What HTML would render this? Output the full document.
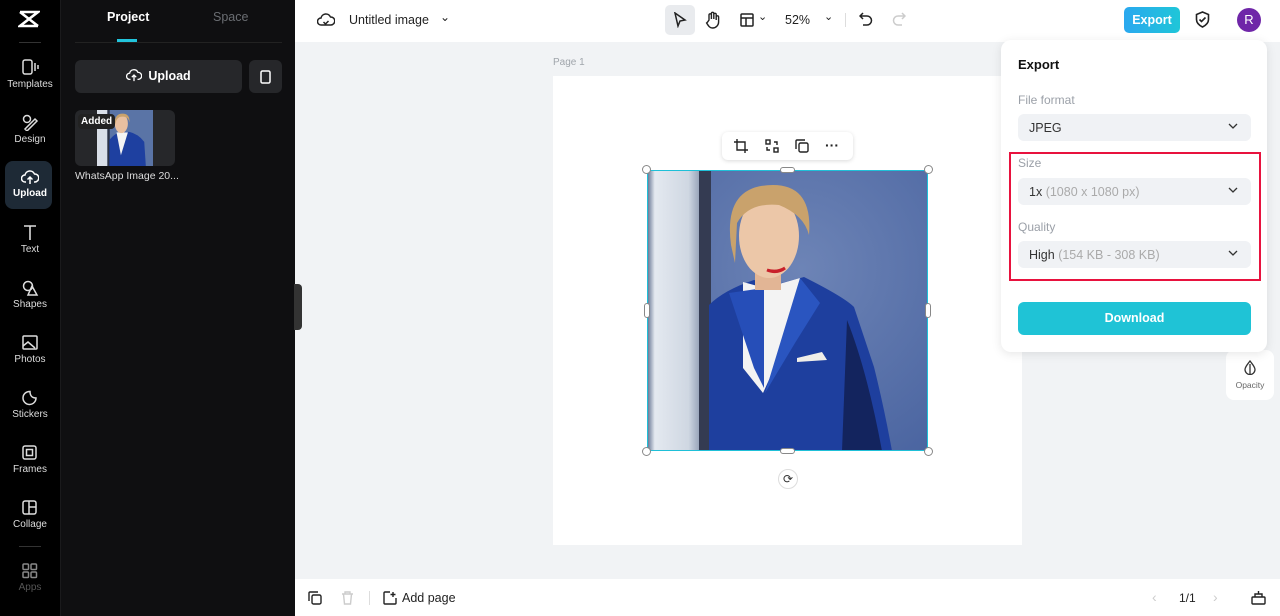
<!DOCTYPE html><html><head><style>
*{box-sizing:border-box;margin:0;padding:0}
body{width:1280px;height:616px;overflow:hidden;font-family:"Liberation Sans",sans-serif;position:relative;background:#f1f3f5}
.abs{position:absolute}
.rail{left:0;top:0;width:60px;height:616px;background:#000}
.ri{position:absolute;left:0;width:60px;text-align:center;color:#ddd;font-size:10px}
.ri svg{display:block;margin:0 auto 3px}
.panel{left:60px;top:0;width:235px;height:616px;background:#0f0f11;border-left:1px solid #1a1a1c}
.top{left:295px;top:0;width:985px;height:42px;background:#fff}
.bot{left:295px;top:579px;width:985px;height:37px;background:#fff}
.lbl{font-size:12px;color:#9ba0a8}
.dd{position:absolute;left:17px;width:233px;height:27px;background:#f0f2f5;border-radius:6px;font-size:12.5px;color:#333;padding:7px 11px}
.dd .c{position:absolute;right:12px;top:6px}
.h{width:9px;height:9px;border:1px solid #888;border-radius:50%;background:#fff;position:absolute}
</style></head><body>
<div class="abs rail">
 <svg class="abs" style="left:18px;top:10px" width="22" height="18" viewBox="0 0 22 18"><path d="M2 2h18L2 16h18M2 2l18 14M20 2L2 16" stroke="#fff" stroke-width="2.6" fill="none"/></svg>
 <div class="abs" style="left:19px;top:42px;width:22px;height:1px;background:#333"></div>
 <div class="ri" style="top:58px"><svg width="18" height="18" viewBox="0 0 18 18" fill="none" stroke="#ddd" stroke-width="1.5"><rect x="2" y="2" width="9" height="14" rx="2"/><path d="M14 5v8M17 7v4"/></svg>Templates</div>
 <div class="ri" style="top:113px"><svg width="18" height="18" viewBox="0 0 18 18" fill="none" stroke="#ddd" stroke-width="1.5"><circle cx="6" cy="6" r="3.5"/><path d="M4 16l10-10 2 2-10 10z"/></svg>Design</div>
 <div class="abs" style="left:5px;top:161px;width:47px;height:48px;background:#1e2a36;border-radius:8px"></div>
 <div class="ri" style="top:169px;color:#fff;font-weight:bold"><svg width="18" height="16" viewBox="0 0 18 16" fill="none" stroke="#fff" stroke-width="1.5"><path d="M5 13H4a3.5 3.5 0 010-7 5 5 0 019.5-1A3.5 3.5 0 0114 13h-1M9 15V8M6.5 10.5L9 8l2.5 2.5"/></svg>Upload</div>
 <div class="ri" style="top:224px"><svg width="18" height="17" viewBox="0 0 18 17" fill="none" stroke="#ddd" stroke-width="1.6"><path d="M3 2h12M9 2v14"/></svg>Text</div>
 <div class="ri" style="top:279px"><svg width="18" height="17" viewBox="0 0 18 17" fill="none" stroke="#ddd" stroke-width="1.5"><circle cx="7" cy="7" r="4.5"/><path d="M11 7l5 9H7z"/></svg>Shapes</div>
 <div class="ri" style="top:334px"><svg width="18" height="17" viewBox="0 0 18 17" fill="none" stroke="#ddd" stroke-width="1.5"><rect x="2" y="2" width="14" height="13" rx="1"/><path d="M2 12l5-4 7 6"/></svg>Photos</div>
 <div class="ri" style="top:389px"><svg width="18" height="17" viewBox="0 0 18 17" fill="none" stroke="#ddd" stroke-width="1.5"><path d="M15 9a6.5 6.5 0 11-6-6.5c0 4 2 6.5 6 6.5z"/></svg>Stickers</div>
 <div class="ri" style="top:444px"><svg width="18" height="17" viewBox="0 0 18 17" fill="none" stroke="#ddd" stroke-width="1.5"><rect x="2" y="2" width="13" height="13" rx="2"/><rect x="5.5" y="5.5" width="6" height="6"/></svg>Frames</div>
 <div class="ri" style="top:499px"><svg width="18" height="17" viewBox="0 0 18 17" fill="none" stroke="#ddd" stroke-width="1.5"><rect x="2" y="2" width="13" height="13" rx="2"/><path d="M8 2v13M8 8h7"/></svg>Collage</div>
 <div class="abs" style="left:19px;top:546px;width:22px;height:1px;background:#333"></div>
 <div class="ri" style="top:562px;color:#555"><svg width="18" height="17" viewBox="0 0 18 17" fill="none" stroke="#888" stroke-width="1.5"><rect x="2" y="2" width="5.5" height="5.5" rx="1"/><rect x="10" y="2" width="5.5" height="5.5" rx="1"/><rect x="2" y="10" width="5.5" height="5.5" rx="1"/><rect x="10" y="10" width="5.5" height="5.5" rx="1"/></svg>Apps</div>
</div>
<div class="abs panel">
 <div class="abs" style="left:46px;top:10px;color:#fff;font-weight:bold;font-size:12.5px">Project</div>
 <div class="abs" style="left:152px;top:10px;color:#6a6d72;font-size:12.5px">Space</div>
 <div class="abs" style="left:56px;top:39px;width:20px;height:3px;background:#22c4dc"></div>
 <div class="abs" style="left:14px;top:42px;width:207px;height:1px;background:#222"></div>
 <div class="abs" style="left:14px;top:60px;width:167px;height:33px;background:#26272a;border-radius:6px;color:#fff;font-weight:bold;font-size:12.5px;text-align:center;line-height:33px"><svg width="16" height="14" viewBox="0 0 18 16" fill="none" stroke="#fff" stroke-width="1.5" style="vertical-align:-2px;margin-right:6px"><path d="M5 13H4a3.5 3.5 0 010-7 5 5 0 019.5-1A3.5 3.5 0 0114 13h-1M9 15V8M6.5 10.5L9 8l2.5 2.5"/></svg>Upload</div>
 <div class="abs" style="left:188px;top:60px;width:33px;height:33px;background:#26272a;border-radius:6px"><svg style="margin:10px 0 0 11px" width="11" height="14" viewBox="0 0 11 14" fill="none" stroke="#fff" stroke-width="1.5"><rect x="1" y="1" width="9" height="12" rx="1.5"/></svg></div>
 <div class="abs" style="left:14px;top:110px;width:100px;height:56px;background:#26272a;border-radius:6px;overflow:hidden">
  <svg class="abs" style="left:22px;top:0" width="56" height="56" viewBox="0 0 281 281"><rect width="281" height="281" fill="#5a74a6"/><rect x="0" width="52" height="281" fill="#d9dfe8"/><rect x="52" width="12" height="281" fill="#2c3346"/><path d="M62 281V150q30-35 60-40h40q45 10 75 50l8 121z" fill="#1e40a0"/><path d="M98 112h57l-35 115z" fill="#f4f4f4"/><ellipse cx="122" cy="68" rx="33" ry="48" fill="#e9c0a0"/><path d="M88 70q0-52 40-52 38 0 35 45-5-30-35-30-30 0-35 35z" fill="#c9a26c"/></svg>
 <div class="abs" style="left:3px;top:4px;background:#222;border-radius:4px;color:#fff;font-weight:bold;font-size:10px;padding:2px 3px">Added</div></div>
 <div class="abs" style="left:14px;top:170px;color:#ddd;font-size:10.5px">WhatsApp Image 20...</div>
</div>
<div class="abs" style="left:294px;top:284px;width:8px;height:46px;background:#333;border-radius:0 4px 4px 0"></div>
<div class="abs top">
 <svg class="abs" style="left:22px;top:12px" width="18" height="16" viewBox="0 0 18 16" fill="none" stroke="#222" stroke-width="1.5"><path d="M5 13H4a3.5 3.5 0 010-7 5 5 0 019.5-1A3.5 3.5 0 0114 13zM6.5 10l2 2 3-3"/></svg>
 <div class="abs" style="left:54px;top:13px;font-size:12.5px;color:#222">Untitled image</div>
 <div class="abs" style="left:145px;top:10px;font-size:12px;color:#222">⌄</div>
 <div class="abs" style="left:370px;top:5px;width:30px;height:30px;background:#e9ebee;border-radius:5px"></div>
 <svg class="abs" style="left:378px;top:12px" width="14" height="16" viewBox="0 0 14 16" fill="none" stroke="#222" stroke-width="1.5"><path d="M2 1l10 7-5 1-2 5z"/></svg>
 <svg class="abs" style="left:410px;top:11px" width="16" height="18" viewBox="0 0 16 18" fill="none" stroke="#222" stroke-width="1.4"><path d="M4 9V4a1.2 1.2 0 012.4 0v4V2.5a1.2 1.2 0 012.4 0V8V3.5a1.2 1.2 0 012.4 0V9V6a1.2 1.2 0 012.4 0v5a6 6 0 01-6 6c-3 0-4-2-6-5l1-1z"/></svg>
 <svg class="abs" style="left:445px;top:13px" width="14" height="14" viewBox="0 0 14 14" fill="none" stroke="#222" stroke-width="1.5"><rect x="1" y="1" width="12" height="12" rx="1"/><path d="M1 5h12M6 5v8"/></svg>
 <div class="abs" style="left:463px;top:10px;font-size:11px;color:#222">⌄</div>
 <div class="abs" style="left:490px;top:13px;font-size:12.5px;color:#222">52%</div>
 <div class="abs" style="left:529px;top:10px;font-size:11px;color:#222">⌄</div>
 <div class="abs" style="left:550px;top:13px;width:1px;height:14px;background:#ddd"></div>
 <svg class="abs" style="left:564px;top:12px" width="14" height="15" viewBox="0 0 14 15" fill="none" stroke="#222" stroke-width="1.5"><path d="M4 1L1 4l3 3M1 4h7a4.5 4.5 0 010 9H4"/></svg>
 <svg class="abs" style="left:597px;top:12px" width="14" height="15" viewBox="0 0 14 15" fill="none" stroke="#ccc" stroke-width="1.5"><path d="M10 1l3 3-3 3M13 4H6a4.5 4.5 0 000 9h4"/></svg>
 <div class="abs" style="left:829px;top:7px;width:56px;height:26px;background:linear-gradient(90deg,#2aa8ef,#1fc6d8);border-radius:5px;color:#fff;font-weight:bold;font-size:12.5px;text-align:center;line-height:26px">Export</div>
 <svg class="abs" style="left:900px;top:11px" width="15" height="17" viewBox="0 0 15 17" fill="none" stroke="#222" stroke-width="1.6"><path d="M7.5 1L1.5 3.5v5c0 3.5 3 6 6 7.5 3-1.5 6-4 6-7.5v-5zM4.5 8.5l2 2 4-4"/></svg>
 <div class="abs" style="left:942px;top:8px;width:24px;height:24px;border-radius:50%;background:#6f26a8;color:#fff;font-size:13px;text-align:center;line-height:24px">R</div>
</div>
<div class="abs" style="left:553px;top:57px;font-size:10px;color:#a0a5ab">Page 1</div>
<div class="abs" style="left:553px;top:76px;width:469px;height:469px;background:#fff"></div>
<svg class="abs" style="left:647px;top:170px" width="281" height="281" viewBox="0 0 281 281">
 <defs><radialGradient id="bg" cx="0.55" cy="0.35" r="0.8"><stop offset="0" stop-color="#6d84b6"/><stop offset="1" stop-color="#4a64a0"/></radialGradient>
 <linearGradient id="pl" x1="0" x2="1"><stop offset="0" stop-color="#5a6a8a"/><stop offset="0.15" stop-color="#e4e9f0"/><stop offset="0.8" stop-color="#cfd7e2"/><stop offset="1" stop-color="#9aa6bb"/></linearGradient></defs>
 <rect width="281" height="281" fill="url(#bg)"/>
 <rect x="0" width="52" height="281" fill="url(#pl)"/>
 <rect x="52" width="12" height="281" fill="#343b52"/>
 <path d="M62 281V135q15-15 45-25l20 5 30-8q40 20 50 30 10 30 20 60 10 40 18 84z" fill="#1e3f9e"/>
 <path d="M200 150q20 50 35 131h-40z" fill="#13245e"/>
 <path d="M96 112l22 6 35-10-12 60-25 55-20-25z" fill="#f3f3f3"/>
 <path d="M117 118v100l-10-20-25-75z" fill="#264eb8"/>
 <path d="M153 108l-35 115 30-50 25-40z" fill="#2a55c0"/>
 <path d="M150 188l25-6 5 8-30 2z" fill="#f0eee8"/>
 <rect x="108" y="80" width="26" height="40" fill="#e2b595"/>
 <ellipse cx="122" cy="66" rx="30" ry="42" fill="#ecc7a8"/>
 <path d="M120 100q10 4 18-2-8 5-18 2z" fill="#c8202a" stroke="#c8202a" stroke-width="3"/>
 <path d="M84 75q-8-60 42-60 40 0 36 50-5-20-30-30-30-3-42 18l-2 40z" fill="#c9a26c"/>
</svg>
<div class="abs" style="left:647px;top:170px;width:281px;height:281px;border:1.5px solid #1fc0d8"></div>
<div class="h" style="left:642px;top:165px"></div><div class="h" style="left:924px;top:165px"></div><div class="h" style="left:642px;top:447px"></div><div class="h" style="left:924px;top:447px"></div>
<div class="abs" style="left:780px;top:167px;width:15px;height:6px;border:1px solid #888;border-radius:3px;background:#fff"></div>
<div class="abs" style="left:780px;top:448px;width:15px;height:6px;border:1px solid #888;border-radius:3px;background:#fff"></div>
<div class="abs" style="left:644px;top:303px;width:6px;height:15px;border:1px solid #888;border-radius:3px;background:#fff"></div>
<div class="abs" style="left:925px;top:303px;width:6px;height:15px;border:1px solid #888;border-radius:3px;background:#fff"></div>
<div class="abs" style="left:778px;top:469px;width:20px;height:20px;border-radius:50%;background:#fff;border:1px solid #ddd;text-align:center;font-size:12px;line-height:18px;color:#333">⟳</div>
<div class="abs" style="left:722px;top:132px;width:131px;height:28px;background:#fff;border-radius:6px;box-shadow:0 1px 4px rgba(0,0,0,.15)">
 <svg class="abs" style="left:12px;top:7px" width="14" height="14" viewBox="0 0 14 14" fill="none" stroke="#222" stroke-width="1.4"><path d="M3 0v11h11M0 3h11v11"/></svg>
 <svg class="abs" style="left:43px;top:7px" width="14" height="14" viewBox="0 0 14 14" fill="none" stroke="#222" stroke-width="1.4"><rect x="1" y="1" width="4" height="4"/><rect x="9" y="9" width="4" height="4"/><path d="M9 3h3v3M5 11H2V8"/></svg>
 <svg class="abs" style="left:73px;top:7px" width="14" height="14" viewBox="0 0 14 14" fill="none" stroke="#222" stroke-width="1.4"><rect x="4" y="4" width="9" height="9" rx="1.5"/><path d="M10 1H2a1 1 0 00-1 1v8"/></svg>
 <div class="abs" style="left:103px;top:5px;font-size:14px;color:#222;font-weight:bold">···</div>
</div>
<div class="abs" style="left:1226px;top:350px;width:48px;height:50px;background:#fff;border-radius:8px"><svg class="abs" style="left:18px;top:10px" width="12" height="15" viewBox="0 0 12 15" fill="none" stroke="#333" stroke-width="1.3"><path d="M6 1C3 5 1 7 1 9.5a5 5 0 0010 0C11 7 9 5 6 1z"/><path d="M6 4v10" /></svg><div class="abs" style="left:0;top:30px;width:48px;text-align:center;font-size:8.5px;color:#666">Opacity</div></div>
<div class="abs" style="left:1001px;top:40px;width:266px;height:312px;background:#fff;border-radius:10px;box-shadow:0 2px 10px rgba(0,0,0,.1)">
 <div class="abs" style="left:17px;top:17px;font-weight:bold;font-size:13px;color:#111">Export</div>
 <div class="abs lbl" style="left:17px;top:53px">File format</div>
 <div class="dd" style="top:74px">JPEG<svg class="c" width="12" height="12" viewBox="0 0 12 12" fill="none" stroke="#333" stroke-width="1.3"><path d="M2 4l4 4 4-4"/></svg></div>
 <div class="abs" style="left:8px;top:112px;width:252px;height:129px;border:2px solid #e8123e"></div>
 <div class="abs lbl" style="left:17px;top:116px">Size</div>
 <div class="dd" style="top:138px">1x <span style="color:#aaa">(1080 x 1080 px)</span><svg class="c" width="12" height="12" viewBox="0 0 12 12" fill="none" stroke="#333" stroke-width="1.3"><path d="M2 4l4 4 4-4"/></svg></div>
 <div class="abs lbl" style="left:17px;top:180px">Quality</div>
 <div class="dd" style="top:201px">High <span style="color:#aaa">(154 KB - 308 KB)</span><svg class="c" width="12" height="12" viewBox="0 0 12 12" fill="none" stroke="#333" stroke-width="1.3"><path d="M2 4l4 4 4-4"/></svg></div>
 <div class="abs" style="left:17px;top:262px;width:233px;height:33px;background:#1fc3d6;border-radius:6px;color:#fff;font-weight:bold;font-size:12.5px;text-align:center;line-height:33px">Download</div>
</div>
<div class="abs bot">
 <svg class="abs" style="left:13px;top:12px" width="14" height="14" viewBox="0 0 14 14" fill="none" stroke="#222" stroke-width="1.4"><rect x="4" y="4" width="9" height="9" rx="1.5"/><path d="M10 1H2a1 1 0 00-1 1v8"/></svg>
 <svg class="abs" style="left:46px;top:12px" width="13" height="14" viewBox="0 0 13 14" fill="none" stroke="#ccc" stroke-width="1.4"><path d="M1 3h11M4 3V1h5v2M2.5 3l1 10h6l1-10"/></svg>
 <div class="abs" style="left:74px;top:12px;width:1px;height:14px;background:#ddd"></div>
 <svg class="abs" style="left:88px;top:12px" width="14" height="14" viewBox="0 0 14 14" fill="none" stroke="#222" stroke-width="1.4"><path d="M13 7v5a1 1 0 01-1 1H2a1 1 0 01-1-1V2a1 1 0 011-1h5M10 1v5M7.5 3.5h5"/></svg>
 <div class="abs" style="left:107px;top:12px;font-size:12.5px;color:#222">Add page</div>
 <div class="abs" style="left:857px;top:10px;font-size:14px;color:#ccc">‹</div>
 <div class="abs" style="left:884px;top:12px;font-size:12px;color:#222">1/1</div>
 <div class="abs" style="left:918px;top:10px;font-size:14px;color:#ccc">›</div>
 <svg class="abs" style="left:956px;top:12px" width="15" height="14" viewBox="0 0 15 14" fill="none" stroke="#222" stroke-width="1.4"><rect x="1" y="6" width="13" height="7" rx="1"/><path d="M4 6V3h7v3M7.5 0v3"/></svg>
</div>
</body></html>
